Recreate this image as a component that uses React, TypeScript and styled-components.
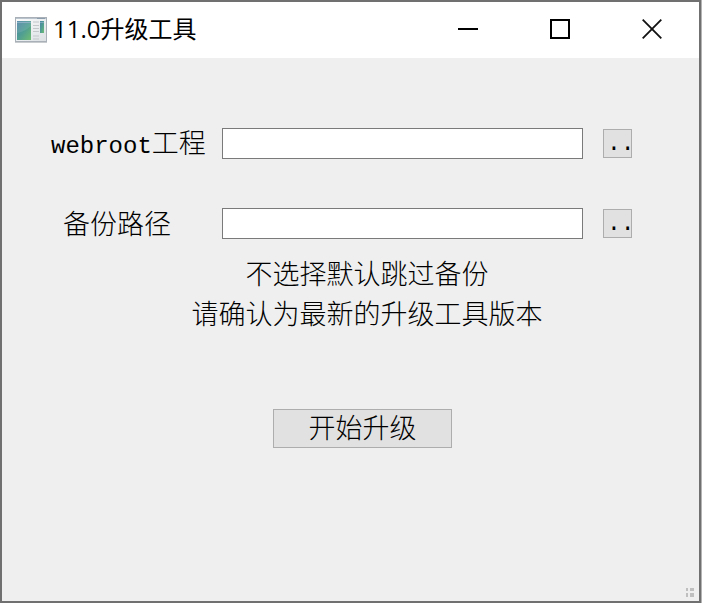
import React from "react";
import styled, { createGlobalStyle } from "styled-components";

const GlobalStyle = createGlobalStyle`
  *, *::before, *::after { box-sizing: border-box; }
  html, body, #root { height: 100%; }
  body { margin: 0; background: #b4b4b4; }
`;

const Window = styled.div`
  display: flex;
  flex-direction: column;
  min-height: 100%;
  margin-right: 1px;
  border: 2px solid #707070;
  background: #efefef;
  color: #000;
`;

const TitleBar = styled.header`
  display: flex;
  align-items: center;
  height: 56px;
  padding: 0 1px 0 13px;
  background: #fff;
`;

const Title = styled.h1`
  flex: 1;
  margin: 0;
  padding: 0 0 2px 6px;
  font: 400 24px/32px "Open Sans", "Noto Sans CJK SC", sans-serif;
`;

const Latin = styled.span`
  font-size: 24px;
`;

const CaptionButton = styled.button`
  display: flex;
  align-items: center;
  justify-content: center;
  width: 92px;
  height: 56px;
  padding: 0 0 2px;
  border: 0;
  background: transparent;
`;

const Form = styled.form`
  display: flex;
  flex: 1;
  flex-direction: column;
  padding-top: 70px;
  font: 300 27px/40px "Liberation Mono", "Noto Sans CJK SC", monospace;
`;

const Row = styled.div`
  display: grid;
  grid-template-columns: 220px 1fr 29px;
  grid-template-rows: 31px;
  align-items: center;
  margin: 0 67px 49px 0;
`;

const Label = styled.label<{ $indent: number }>`
  padding: 6px 0 0 ${(p) => p.$indent}px;
  line-height: 32px;
  white-space: nowrap;
`;

const InputCell = styled.div`
  display: flex;
  padding-right: 20px;
`;

const PathInput = styled.input`
  width: 100%;
  min-width: 0;
  height: 31px;
  padding: 0 4px;
  border: 1px solid #7a7a7a;
  border-radius: 0;
  background: #fff;
  font: inherit;
  font-size: 20px;
  outline: none;
`;

const PushButton = styled.button`
  display: flex;
  align-items: center;
  justify-content: center;
  border: 1px solid #adadad;
  background: #e1e1e1;
  color: #000;
  font: inherit;
`;

const BrowseButton = styled(PushButton)`
  justify-content: flex-start;
  width: 29px;
  height: 29px;
  padding: 1px 0 0 3px;
  font-size: 23px;
  line-height: 24px;
`;

const Notice = styled.div`
  margin-top: -31px;
  padding-left: 33px;
  text-align: center;
`;

const NoticeLine = styled.p`
  margin: 0;
`;

const StartButton = styled(PushButton)`
  align-self: center;
  width: 179px;
  height: 39px;
  margin: 72px 0 0 24px;
  padding: 5px 0 0;
  line-height: 32px;
`;

const Footer = styled.footer`
  display: flex;
  justify-content: flex-end;
  margin-top: auto;
  padding: 0 5px 4px 0;
`;

const AppIcon = () => (
  <svg width="32" height="26" viewBox="0 0 32 26" aria-hidden="true">
    <defs>
      <linearGradient id="pane" x1="0" y1="0" x2="1" y2="1">
        <stop offset="0" stopColor="#4b82a6" />
        <stop offset="0.5" stopColor="#4f9d93" />
        <stop offset="1" stopColor="#6fbd72" />
      </linearGradient>
      <linearGradient id="frame" x1="0" y1="0" x2="1" y2="1">
        <stop offset="0" stopColor="#fbfcfc" />
        <stop offset="1" stopColor="#dce0e3" />
      </linearGradient>
    </defs>
    <rect x="0.5" y="0.5" width="31" height="24" fill="url(#frame)" stroke="#a9b0b7" />
    <path d="M1 1.5h30" stroke="#b8c3ce" />
    <path d="M22 1.5h8" stroke="#8c9dad" />
    <path d="M0 25.5h32" stroke="#c9cccf" />
    <rect x="2" y="4" width="14" height="19" fill="url(#pane)" />
    <path d="M2 5.5h14" stroke="#7fa8bd" />
    <path d="M2 16Q9 15 16 9V4H2z" fill="#fff" opacity="0.1" />
    <path d="M18 5h6M18 8.5h6M18 11.5h6M18 14.5h6M18 19h6M18 22h6" stroke="#c3c7ca" />
    <rect x="25" y="4" width="4" height="12" fill="url(#pane)" />
    <path d="M25 5.5h4" stroke="#7fa8bd" />
  </svg>
);

const MinimizeIcon = () => (
  <svg width="20" height="20" viewBox="0 0 20 20" aria-hidden="true">
    <path d="M0 10h20" stroke="#000" strokeWidth="2" />
  </svg>
);

const MaximizeIcon = () => (
  <svg width="20" height="20" viewBox="0 0 20 20" aria-hidden="true">
    <rect x="1" y="1" width="18" height="18" fill="none" stroke="#000" strokeWidth="2" />
  </svg>
);

const CloseIcon = () => (
  <svg width="20" height="20" viewBox="0 0 20 20" aria-hidden="true">
    <path d="M0.7 0.7l18.6 18.6M19.3 0.7L0.7 19.3" stroke="#111" strokeWidth="1.8" />
  </svg>
);

const SizeGrip = () => (
  <svg width="8" height="9" viewBox="0 0 8 9" aria-hidden="true">
    <path d="M0 0h2v3H0zM4 0h4v3H4zM0 5h2v4H0zM4 5h4v4H4z" fill="#bfbfbf" />
  </svg>
);

export default function App() {
  return (
    <>
      <GlobalStyle />
      <Window>
        <TitleBar>
          <AppIcon />
          <Title>11.0升级工具</Title>
          <CaptionButton type="button" aria-label="最小化"><MinimizeIcon /></CaptionButton>
          <CaptionButton type="button" aria-label="最大化"><MaximizeIcon /></CaptionButton>
          <CaptionButton type="button" aria-label="关闭"><CloseIcon /></CaptionButton>
        </TitleBar>
        <Form onSubmit={(e) => e.preventDefault()}>
          <Row>
            <Label htmlFor="webroot" $indent={49}><Latin>webroot</Latin>工程</Label>
            <InputCell><PathInput id="webroot" type="text" /></InputCell>
            <BrowseButton type="button">..</BrowseButton>
          </Row>
          <Row>
            <Label htmlFor="backup" $indent={61}>备份路径</Label>
            <InputCell><PathInput id="backup" type="text" /></InputCell>
            <BrowseButton type="button">..</BrowseButton>
          </Row>
          <Notice>
            <NoticeLine>不选择默认跳过备份</NoticeLine>
            <NoticeLine>请确认为最新的升级工具版本</NoticeLine>
          </Notice>
          <StartButton type="submit">开始升级</StartButton>
          <Footer><SizeGrip /></Footer>
        </Form>
      </Window>
    </>
  );
}
